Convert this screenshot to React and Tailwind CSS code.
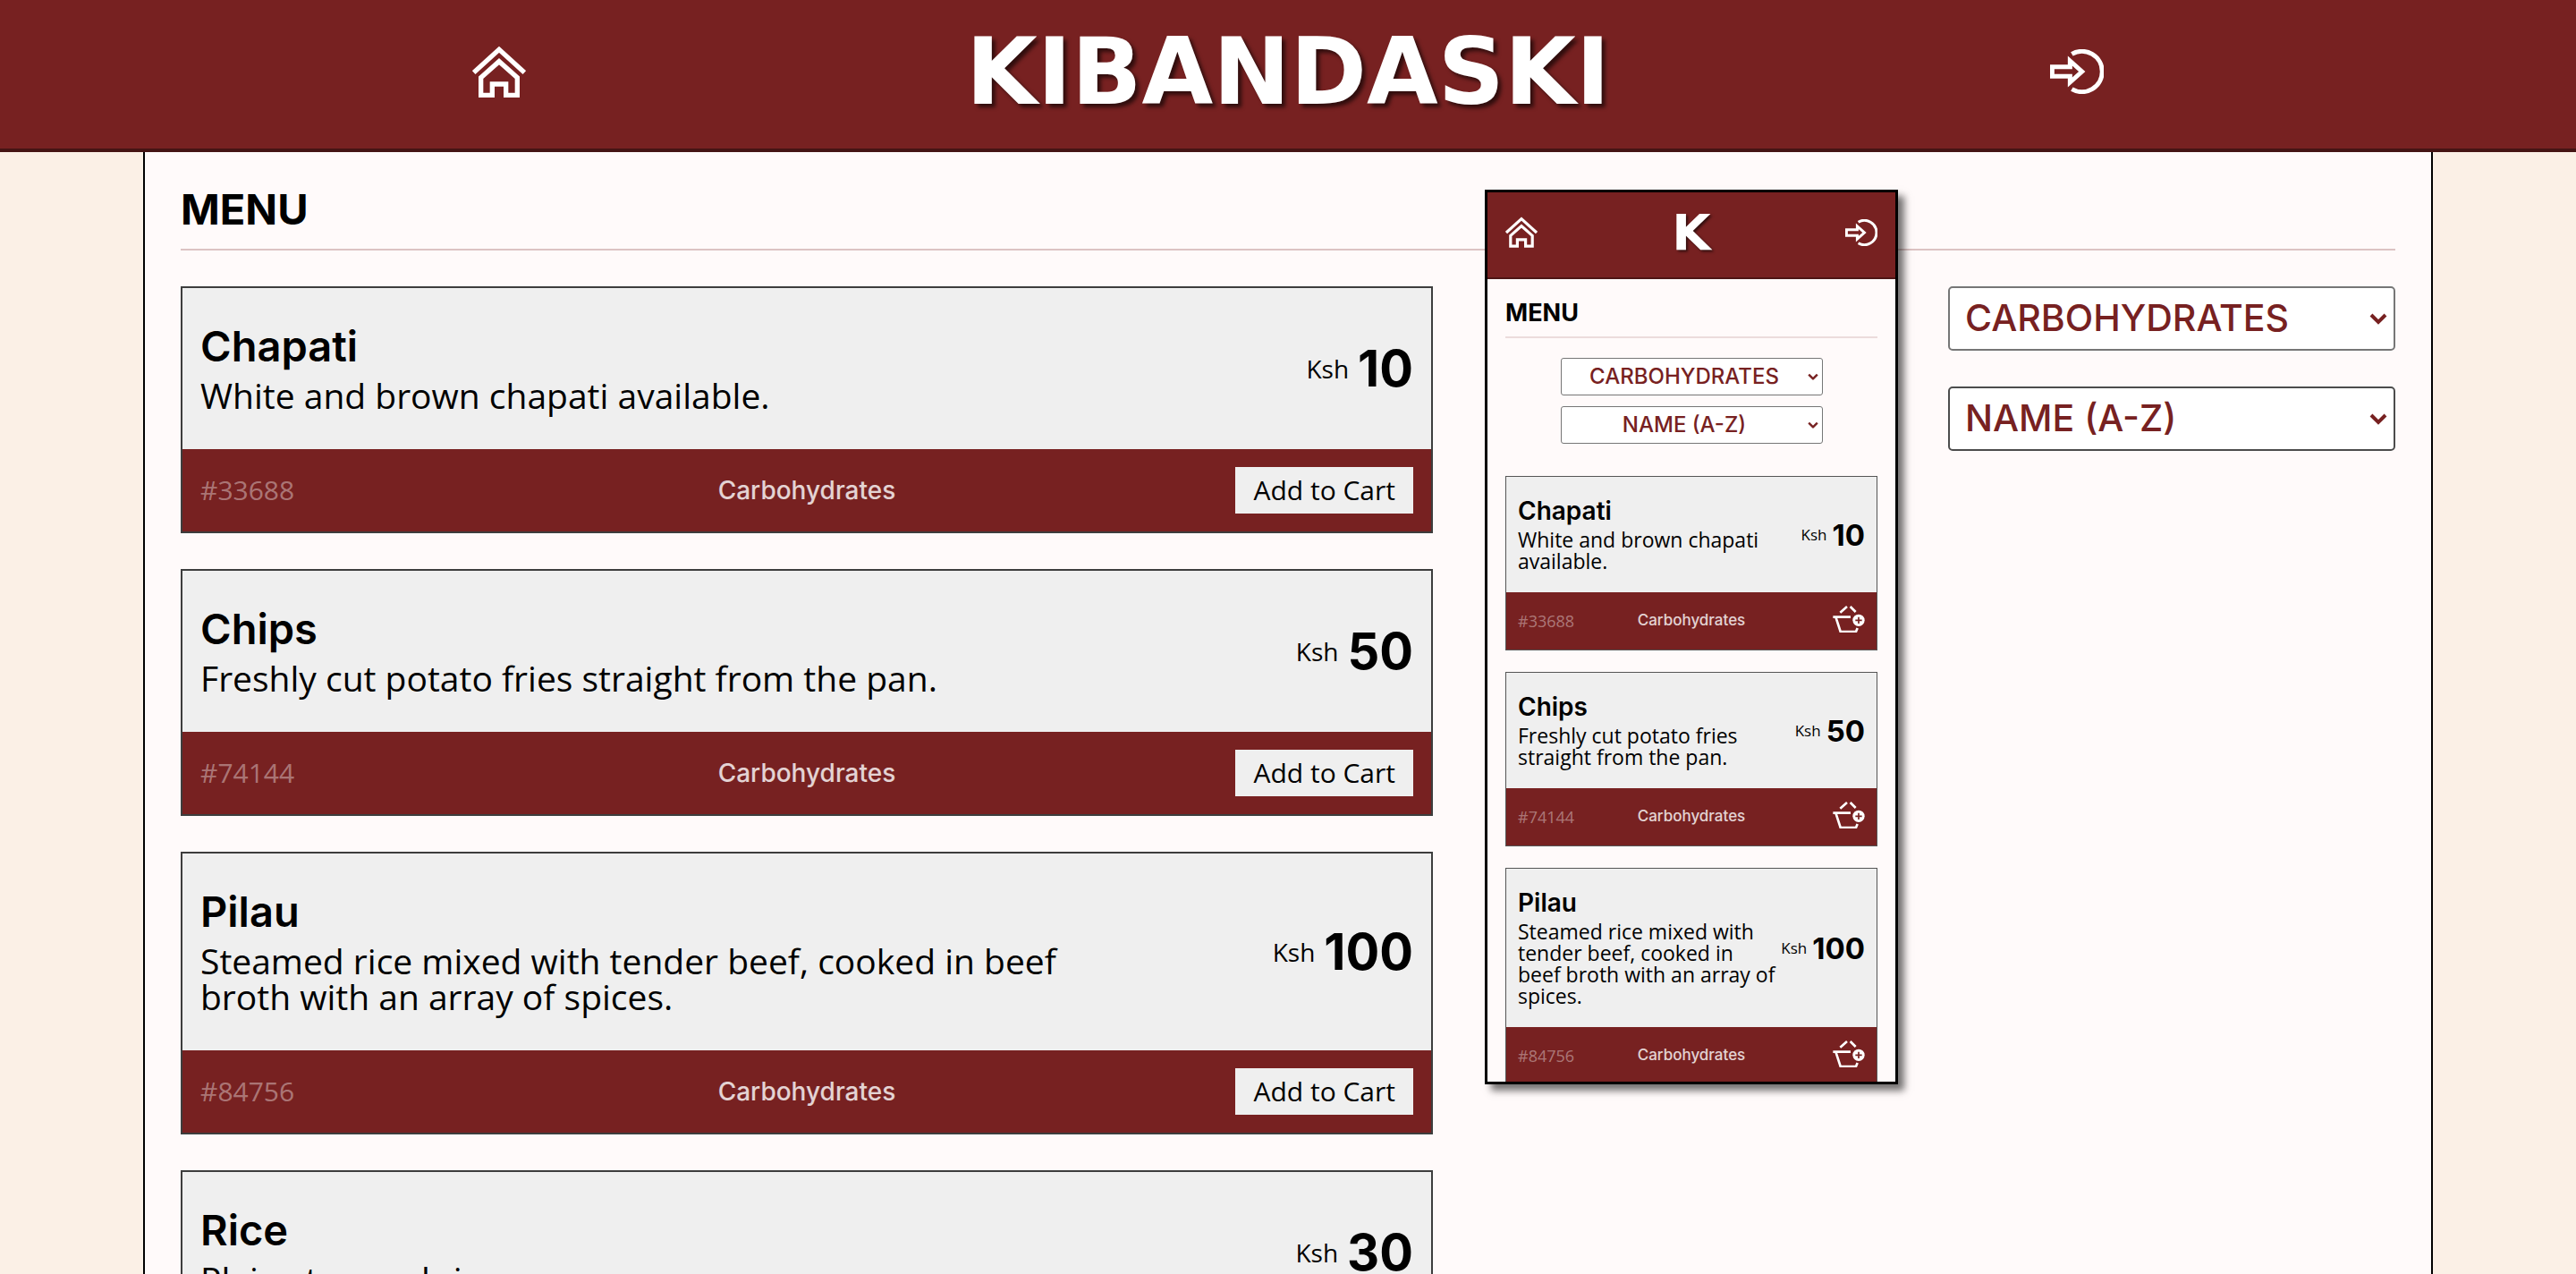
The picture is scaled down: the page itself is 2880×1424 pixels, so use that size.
const ITEMS = [
  { name: 'Chapati', text: 'White and brown chapati available.', price: 10, id: '#33688' },
  { name: 'Chips', text: 'Freshly cut potato fries straight from the pan.', price: 50, id: '#74144' },
  { name: 'Pilau', text: 'Steamed rice mixed with tender beef, cooked in beef broth with an array of spices.', price: 100, id: '#84756' },
  { name: 'Rice', text: 'Plain steamed rice.', price: 30, id: '#90213' },
];

function HomeIcon({ className }) {
  return (
    <svg viewBox="84 66 180 176" className={className} fill="none" stroke="currentColor" strokeWidth="16" aria-hidden="true">
      <path d="M89 156 174 79 259 156" />
      <path d="M113 173 174 119 235 173V232H197V195H151V232H113Z" />
    </svg>
  );
}

function LoginIcon({ className }) {
  return (
    <svg viewBox="66 75 180 150" className={className} fill="none" stroke="currentColor" strokeWidth="15" aria-hidden="true">
      <path d="M73 134H133V114L173 150 133 186V166H73Z" />
      <path d="M139 91A68 68 0 1 1 139 209" />
    </svg>
  );
}

function BasketIcon({ className }) {
  return (
    <svg viewBox="29 32 108 92" className={className} fill="none" stroke="currentColor" strokeWidth="8" aria-hidden="true">
      <path d="M30 70H89M39 70 55 119H107L112 107" />
      <path d="M54 55 77 35M88 35 106 53" />
      <circle cx="116" cy="81" r="20" fill="currentColor" stroke="none" />
      <path d="M105 81H127M116 70V92" className="stroke-[#772121]" strokeWidth="5" />
    </svg>
  );
}

function Dropdown({ label, value, compact, dark }) {
  return (
    <div className="relative">
      <select
        aria-label={label}
        className={
          (compact
            ? 'h-[42px] rounded-[3px] border pr-[26px] pl-[10px] text-center text-[24px] '
            : 'h-[72px] rounded-[5px] border-2 px-[17px] text-[41px] ') +
          (dark ? 'border-[#4c4c4c] ' : 'border-[#767676] ') +
          "block w-full appearance-none bg-white font-['Inter',sans-serif] font-medium text-[#772121]"
        }
      >
        <option>{value}</option>
      </select>
      <svg
        viewBox="0 0 20 14"
        className={
          (compact ? 'right-[5px] w-[12px] ' : 'right-[9px] w-[20px] ') +
          'pointer-events-none absolute top-1/2 -translate-y-1/2 text-[#772121]'
        }
        fill="none"
        stroke="currentColor"
        strokeWidth="4"
        aria-hidden="true"
      >
        <path d="M2 3 10 11 18 3" />
      </svg>
    </div>
  );
}

function Card({ item }) {
  return (
    <article className="border-2 border-[#3d3d3d] bg-[#efefef]">
      <div className="flex items-center justify-between px-5 py-10">
        <div className="w-3/4">
          <h3 className="font-['Inter',sans-serif] text-[47px] leading-[50px] font-semibold">{item.name}</h3>
          <p className="mt-[10px] text-[39px] leading-10">{item.text}</p>
        </div>
        <p className="flex items-center gap-[10px]">
          <span className="text-[28px]">Ksh</span>
          <span className="font-['Inter',sans-serif] text-[56px] leading-[50px] font-bold">{item.price}</span>
        </p>
      </div>
      <div className="grid grid-cols-3 items-center bg-[#772121] p-5">
        <span className="text-[30px] leading-8 text-white/40">{item.id}</span>
        <span className="text-center font-['Inter',sans-serif] text-[28px] leading-8 font-medium text-white/80">Carbohydrates</span>
        <button className="justify-self-end bg-[#efefef] px-5 text-[30px] leading-[52px]">Add to Cart</button>
      </div>
    </article>
  );
}

function PhoneCard({ item }) {
  return (
    <article className="border border-[#555] bg-[#efefef]">
      <div className="flex items-center justify-between gap-1 px-[13px] pt-6 pb-[23px]">
        <div className="flex-1">
          <h3 className="font-['Inter',sans-serif] text-[28px] leading-7 font-semibold">{item.name}</h3>
          <p className="mt-1.5 text-[23px] leading-6">{item.text}</p>
        </div>
        <p className="flex items-center gap-[6px]">
          <span className="text-[17px]">Ksh</span>
          <span className="font-['Inter',sans-serif] text-[33px] leading-8 font-bold">{item.price}</span>
        </p>
      </div>
      <div className="grid h-[64px] grid-cols-3 items-center bg-[#772121] px-[13px]">
        <span className="text-[18px] text-white/40">{item.id}</span>
        <span className="text-center font-['Inter',sans-serif] text-[17px] font-medium text-white/80">Carbohydrates</span>
        <button aria-label="Add to cart" className="justify-self-end text-white">
          <BasketIcon className="mb-1 w-[36px]" />
        </button>
      </div>
    </article>
  );
}

function Phone() {
  return (
    <section
      aria-label="Mobile view"
      className="absolute top-[42px] right-[596px] h-[1000px] w-[462px] overflow-hidden border-[3px] border-black bg-[#fffafa] shadow-[7px_7px_8px_rgba(0,0,0,0.55)]"
    >
      <header className="flex h-[97px] items-center justify-between border-b-2 border-[#4d1515] bg-[#772121] px-5 pb-1.5 text-white">
        <a href="#home" aria-label="Home"><HomeIcon className="w-[36px]" /></a>
        <span className="font-['DejaVu_Sans',sans-serif] text-[56px] leading-none font-bold [text-shadow:2px_2px_3px_rgba(0,0,0,0.6)]">K</span>
        <a href="#login" aria-label="Log in"><LoginIcon className="w-[36px]" /></a>
      </header>
      <div className="px-5 pt-5">
        <h2 className="border-b-2 border-[#ecdcdc] pb-2 font-['Inter',sans-serif] text-[27px] leading-9 font-bold">MENU</h2>
        <div className="mx-auto mt-[22px] grid w-[293px] gap-3">
          <Dropdown label="Category" value="CARBOHYDRATES" compact />
          <Dropdown label="Sort by" value="NAME (A-Z)" compact />
        </div>
        <div className="mt-9 grid gap-6">
          {ITEMS.slice(0, 3).map((item) => <PhoneCard key={item.id} item={item} />)}
        </div>
      </div>
    </section>
  );
}

export default function App() {
  return (
    <div className="flex h-screen flex-col overflow-hidden bg-[#fbf0e6] font-['Open_Sans',sans-serif] text-black">
      <header className="shrink-0 border-b-4 border-[#451414] bg-[#772121]">
        <div className="mx-auto flex h-[166px] max-w-[1824px] items-center justify-between pb-1.5 text-white">
          <a href="#home" aria-label="Home"><HomeIcon className="w-[60px]" /></a>
          <h1 className="font-['DejaVu_Sans',sans-serif] text-[103px] leading-none font-bold [text-shadow:4px_4px_4px_rgba(0,0,0,0.6)]">KIBANDASKI</h1>
          <a href="#login" aria-label="Log in"><LoginIcon className="w-[60px]" /></a>
        </div>
      </header>
      <main className="relative mx-40 flex-1 border-x-2 border-black bg-[#fffafa] px-10 pt-10">
        <h2 className="border-b-2 border-[#dcc3c3] pb-5 font-['Inter',sans-serif] text-[47px] leading-[48px] font-bold">MENU</h2>
        <div className="mt-10 flex items-start gap-[576px]">
          <div className="grid flex-1 gap-10">
            {ITEMS.map((item) => <Card key={item.id} item={item} />)}
          </div>
          <aside className="grid w-[500px] gap-10">
            <Dropdown label="Category" value="CARBOHYDRATES" />
            <Dropdown label="Sort by" value="NAME (A-Z)" dark />
          </aside>
        </div>
        <Phone />
      </main>
    </div>
  );
}
